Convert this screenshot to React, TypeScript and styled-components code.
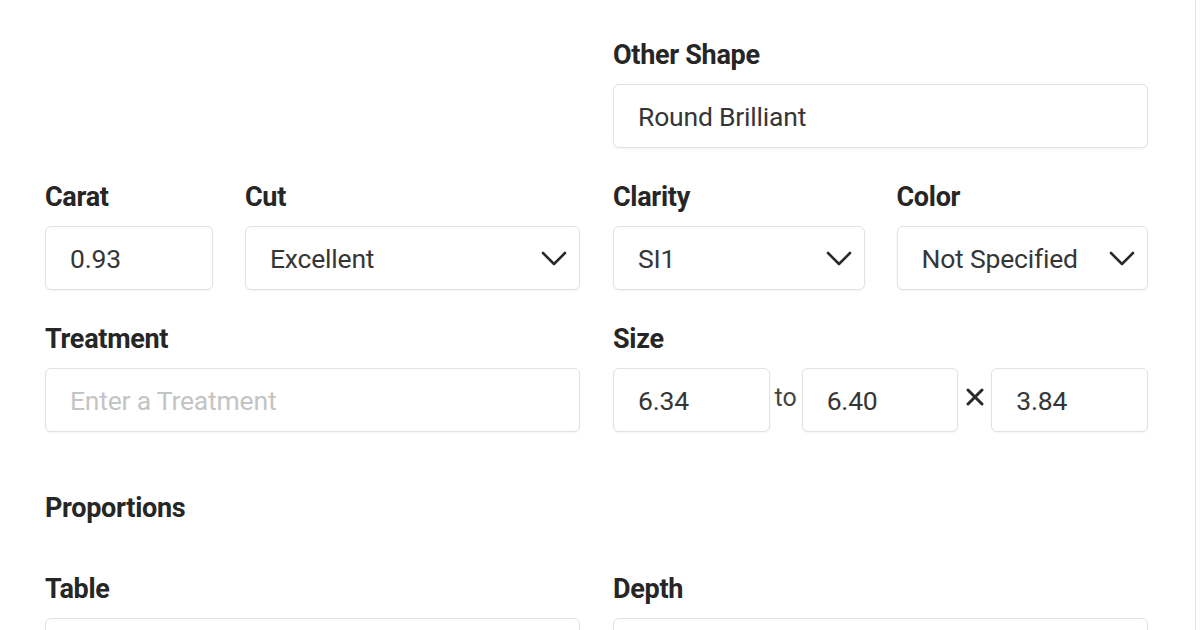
import React from "react";
import styled, { createGlobalStyle } from "styled-components";

const Global = createGlobalStyle`
  html, body { margin: 0; padding: 0; background: #fff; }
  body { font-family: Roboto, "Noto Sans", Arial, sans-serif; }
  * { box-sizing: border-box; }
`;

const Panel = styled.div`
  width: 1196px;
  height: 630px;
  overflow: hidden;
  border-right: 1px solid #e4e4e4;
  padding: 41px 0 0 45px;
`;

const Form = styled.div`
  width: 1103px;
  display: grid;
  grid-template-columns: 535px 535px;
  column-gap: 33px;
  row-gap: 35px;
`;

const Pair = styled.div<{ $cols: string }>`
  display: grid;
  grid-template-columns: ${(p) => p.$cols};
  column-gap: 32px;
`;

const Field = styled.div`
  display: flex;
  flex-direction: column;
  min-width: 0;
`;

const Label = styled.div`
  font-size: 27px;
  line-height: 28px;
  font-weight: 700;
  color: #262626;
  margin-bottom: 15px;
  letter-spacing: -0.3px;
  white-space: nowrap;
`;

const Section = styled.div<{ $top: number; $bottom: number }>`
  grid-column: 1 / span 2;
  font-size: 27px;
  line-height: 28px;
  font-weight: 700;
  color: #262626;
  margin-top: ${(p) => p.$top}px;
  margin-bottom: ${(p) => p.$bottom}px;
  letter-spacing: -0.3px;
`;

const Box = styled.div<{ $placeholder?: boolean; $grow?: boolean }>`
  height: 64px;
  flex: ${(p) => (p.$grow ? "1 1 0" : "none")};
  border: 1.5px solid #e2e2e2;
  border-radius: 6px;
  box-shadow: 0 1px 2px rgba(0, 0, 0, 0.05);
  background: #fff;
  display: flex;
  align-items: center;
  padding: 0 12px 0 24px;
  font-size: 26.5px;
  letter-spacing: -0.2px;
  color: ${(p) => (p.$placeholder ? "#c4c4c4" : "#363636")};
  white-space: nowrap;
  min-width: 0;
`;

const BoxText = styled.span`
  flex: 1;
  overflow: hidden;
`;

const SizeRow = styled.div`
  display: flex;
  align-items: center;
`;

const Sep = styled.span`
  width: 32px;
  text-align: center;
  font-size: 25px;
  color: #444;
  flex: none;
  margin-top: -6px;
`;

const Times = styled.span`
  width: 33px;
  display: flex;
  justify-content: center;
  flex: none;
  margin-top: -6px;
`;

const Chevron = () => (
  <svg width="26" height="15" viewBox="0 0 26 15" fill="none">
    <polyline
      points="2,2 13,13 24,2"
      stroke="#2a2a2a"
      strokeWidth="2.6"
      strokeLinecap="round"
      strokeLinejoin="round"
    />
  </svg>
);

const Cross = () => (
  <svg width="18" height="18" viewBox="0 0 18 18" fill="none">
    <path d="M2 2 L16 16 M16 2 L2 16" stroke="#2a2a2a" strokeWidth="3" strokeLinecap="round" />
  </svg>
);

const Select = ({ value }: { value: string }) => (
  <Box>
    <BoxText>{value}</BoxText>
    <Chevron />
  </Box>
);

const Input = ({
  value,
  placeholder,
  grow,
}: {
  value?: string;
  placeholder?: string;
  grow?: boolean;
}) => (
  <Box $placeholder={!value} $grow={grow}>
    <BoxText>{value || placeholder}</BoxText>
  </Box>
);

export default function App() {
  return (
    <>
      <Global />
      <Panel>
        <Form>
          <div />
          <Field>
            <Label>Other Shape</Label>
            <Input value="Round Brilliant" />
          </Field>

          <Pair $cols="168px 1fr">
            <Field>
              <Label>Carat</Label>
              <Input value="0.93" />
            </Field>
            <Field>
              <Label>Cut</Label>
              <Select value="Excellent" />
            </Field>
          </Pair>
          <Pair $cols="1fr 1fr">
            <Field>
              <Label>Clarity</Label>
              <Select value="SI1" />
            </Field>
            <Field>
              <Label>Color</Label>
              <Select value="Not Specified" />
            </Field>
          </Pair>

          <Field>
            <Label>Treatment</Label>
            <Input placeholder="Enter a Treatment" />
          </Field>
          <Field>
            <Label>Size</Label>
            <SizeRow>
              <Input value="6.34" grow />
              <Sep>to</Sep>
              <Input value="6.40" grow />
              <Times>
                <Cross />
              </Times>
              <Input value="3.84" grow />
            </SizeRow>
          </Field>

          <Section $top={27} $bottom={18}>Proportions</Section>

          <Field>
            <Label>Table</Label>
            <Input value="" placeholder="" />
          </Field>
          <Field>
            <Label>Depth</Label>
            <Input value="" placeholder="" />
          </Field>
        </Form>
      </Panel>
    </>
  );
}
